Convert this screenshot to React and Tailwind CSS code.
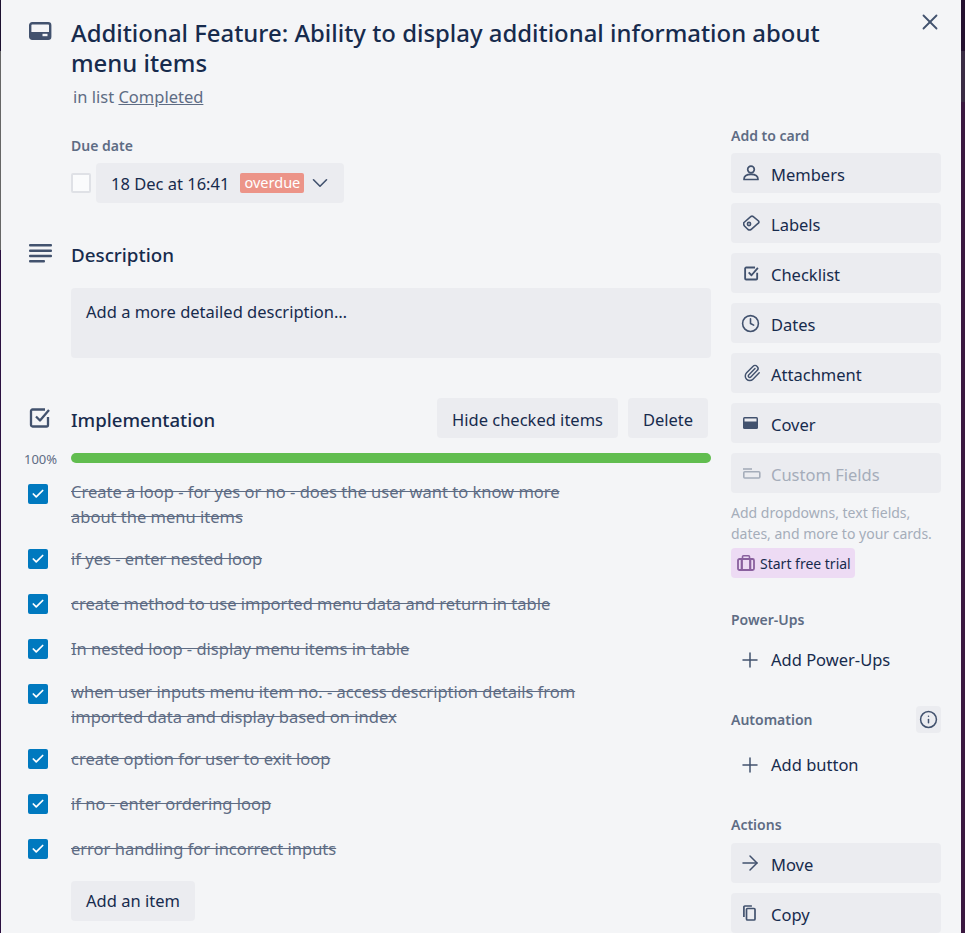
import React from 'react';
import { ChevronDown, X, Clock, Paperclip, Plus, ArrowRight, Info, Check } from 'lucide-react';

const checklist = [
  ['Create a loop - for yes or no - does the user want to know more', 'about the menu items'],
  ['if yes - enter nested loop'],
  ['create method to use imported menu data and return in table'],
  ['In nested loop - display menu items in table'],
  ['when user inputs menu item no. - access description details from', 'imported data and display based on index'],
  ['create option for user to exit loop'],
  ['if no - enter ordering loop'],
  ['error handling for incorrect inputs'],
];

const CardIcon = () => (
  <svg width="24" height="24" viewBox="0 0 24 24" fill="none">
    <rect x="2.200" y="4.200" width="20" height="15.600" rx="2" stroke="#42526e" strokeWidth="2.400" />
    <rect x="2.200" y="13" width="20" height="6.800" fill="#42526e" />
    <rect x="14.500" y="14.800" width="5" height="2.400" fill="#f4f5f7" />
  </svg>
);

const LinesIcon = () => (
  <svg width="24" height="24" viewBox="0 0 24 24" fill="#42526e">
    <rect x="1" y="3" width="23" height="2.400" rx="1" />
    <rect x="1" y="8.500" width="23" height="2.400" rx="1" />
    <rect x="1" y="13.800" width="23" height="2.400" rx="1" />
    <rect x="1" y="19" width="16" height="2.400" rx="1" />
  </svg>
);

const CheckSquare = ({ size = 24, width = 2.300 }) => (
  <svg width={size} height={size} viewBox="0 0 24 24" fill="none" stroke="#42526e" strokeWidth={width} strokeLinejoin="round">
    <path d="M20 11v8a1.500 1.500 0 0 1-1.500 1.500h-14A1.500 1.500 0 0 1 3 19V5a1.500 1.500 0 0 1 1.500-1.500H17" />
    <path d="M8 10.500l4 4 9-10.500" />
  </svg>
);

const MemberIcon = () => (
  <svg width="16" height="16" viewBox="0 0 16 16" fill="none" stroke="#42526e" strokeWidth="1.700">
    <circle cx="8" cy="4.500" r="3.300" />
    <path d="M1 14.200c0-3.400 3-4.800 7-4.800s7 1.400 7 4.800v.3H1z" strokeLinejoin="round" />
  </svg>
);

const TagIcon = () => (
  <svg width="17" height="16" viewBox="0 0 17 16" fill="none" stroke="#42526e" strokeWidth="1.600">
    <path d="M1 7.500L8 1.500Q9 .8 10 1.500L15.500 6Q16.500 7.500 15 8.500L8 14.500Q6.500 15.500 5 14.500L1.500 11Q0 9 1 7.500z" />
    <circle cx="6" cy="9" r="1.600" />
  </svg>
);

const CoverIcon = () => (
  <svg width="15" height="12" viewBox="0 0 15 12">
    <rect width="15" height="12" rx="1.500" fill="#42526e" />
    <rect x="1.500" y="1.500" width="12" height="3" fill="#ebecf0" />
  </svg>
);

const FieldsIcon = () => (
  <svg width="18" height="11" viewBox="0 0 18 11" fill="none" stroke="#a5adba" strokeWidth="1.600">
    <path d="M0 1h9" />
    <rect x=".8" y="3.800" width="16" height="6.200" rx="1" />
  </svg>
);

const CaseIcon = () => (
  <svg width="18" height="18" viewBox="0 0 18 18" fill="none" stroke="#89609e">
    <rect x="1" y="5" width="16" height="11" rx="1.500" strokeWidth="1.800" />
    <path d="M5.500 5V2.800a1 1 0 0 1 1-1h5a1 1 0 0 1 1 1V5" strokeWidth="1.600" />
    <path d="M4.800 5v11M13.200 5v11" strokeWidth="2.200" />
  </svg>
);

const CopyIcon = () => (
  <svg width="13" height="16" viewBox="0 0 13 16" fill="none" stroke="#42526e" strokeWidth="1.700">
    <path d="M.9 12V2a1 1 0 0 1 1-1h7" />
    <rect x="3.500" y="3.500" width="8.500" height="11.500" rx="1" />
  </svg>
);

const SideButton = ({ icon, label, muted }) => (
  <button className={`flex h-10 w-[210px] items-center rounded-[4px] bg-[#ebecf0] pl-3 text-left ${muted ? 'text-[#a5adba]' : 'text-[#172b4d]'}`}>
    <span className="flex w-[28px] justify-start">{icon}</span>
    <span className="pt-[4px]">{label}</span>
  </button>
);

const GhostButton = ({ label }) => (
  <button className="flex h-10 w-[210px] items-center pl-3 text-left text-[#172b4d]">
    <span className="flex w-[28px] justify-start"><Plus className="-ml-[5px]" size={24} color="#42526e" strokeWidth={1.500} /></span>
    {label}
  </button>
);

const SideLabel = ({ children }) => (
  <h3 className="text-[14px] leading-5 font-semibold text-[#5e6c84]">{children}</h3>
);

export default function App() {
  return (
    <div className="flex h-[933px] w-[965px] overflow-hidden font-['Noto_Sans',sans-serif] text-[16.500px] text-[#172b4d]">
      {/* Board peeking out either side of the modal */}
      <div className="flex w-px flex-col bg-[#2b1040]">
        <div className="h-[51px] bg-[#1c1030]" />
        <div className="h-[199px] bg-[#666666]" />
      </div>

      <div className="relative h-full w-[960px] bg-[#f4f5f7]">
        <button className="absolute top-[9px] right-[18px]"><X size={26} color="#42526e" strokeWidth={1.700} /></button>

        {/* Header */}
        <div className="flex pt-[18px] pl-[27px]">
          <span className="mt-[1px] w-[43px]"><CardIcon /></span>
          <div>
            <h2 className="w-[800px] text-[23.900px] leading-[30px] font-medium">
              Additional Feature: Ability to display additional information about menu items
            </h2>
            <p className="mt-[7px] ml-[2px] leading-[24px] text-[#5e6c84]">in list <span className="underline">Completed</span></p>
          </div>
        </div>

        <div className="mt-[27px] flex pr-[20px] pl-[27px]">
          {/* Main column */}
          <div className="w-[684px]">
            <div className="pl-[43px]">
              <h3 className="text-[14px] leading-5 font-semibold text-[#5e6c84]">Due date</h3>
              <div className="mt-[7px] flex items-center">
                <span className="h-5 w-5 rounded-[2px] border-2 border-[#dfe1e6] bg-[#fafbfc]" />
                <button className="ml-[5px] flex h-10 w-[248px] items-center rounded-[4px] bg-[#ebecf0] pl-[15px]">
                  <span className="pt-[2px]">18 Dec at 16:41</span>
                  <span className="ml-[11px] flex h-5 w-[64px] items-center justify-center rounded-[2px] bg-[#ec9488] text-[14.500px] text-white">overdue</span>
                  <ChevronDown className="ml-[3px]" size={26} color="#42526e" strokeWidth={1.500} />
                </button>
              </div>
            </div>

            {/* Description */}
            <div className="mt-[36px] flex h-8 items-center">
              <span className="-mt-[4px] w-[43px]"><LinesIcon /></span>
              <h3 className="text-[18.800px] font-medium">Description</h3>
            </div>
            <div className="mt-[17px] ml-[43px] h-[70px] w-[640px] rounded-[4px] bg-[#ebecf0] px-[15px] py-[12px]">Add a more detailed description…</div>

            {/* Checklist */}
            <div className="mt-[40px] flex h-10 items-center">
              <span className="w-[43px]"><CheckSquare /></span>
              <h3 className="flex-1 pt-[4px] text-[18.600px] font-medium">Implementation</h3>
              <button className="h-10 w-[181px] rounded-[4px] bg-[#ebecf0] pt-[4px]">Hide checked items</button>
              <button className="mr-[3px] ml-[10px] h-10 w-[80px] rounded-[4px] bg-[#ebecf0] pt-[4px]">Delete</button>
            </div>
            <div className="mt-[15px] flex h-[10px] items-center">
              <span className="-ml-[4px] w-[47px] pt-[4px] text-[13px] text-[#5e6c84]">100%</span>
              <div className="h-[10px] w-[640px] rounded-full bg-[#61bd4f]" />
            </div>

            <ul className="mt-[18px]">
              {checklist.map((lines) => (
                <li key={lines[0]} className={`flex ${lines.length > 1 ? '-mt-[2px] pb-[17px]' : 'pb-[20px]'}`}>
                  <span className={`flex h-5 w-5 items-center justify-center rounded-[2px] bg-[#0079bf] ${lines.length > 1 ? 'mt-[5px]' : 'mt-[3px]'}`}>
                    <Check size={14} color="#fff" strokeWidth={3} />
                  </span>
                  <div className="ml-[23px] leading-[25px] text-[#5e6c84] line-through">
                    {lines.map((line) => <div key={line}>{line}</div>)}
                  </div>
                </li>
              ))}
            </ul>
            <button className="ml-[43px] h-10 w-[124px] rounded-[4px] bg-[#ebecf0]">Add an item</button>
          </div>

          {/* Sidebar */}
          <aside className="-mt-[10px] ml-[20px] w-[210px]">
            <SideLabel>Add to card</SideLabel>
            <div className="mt-[7px] flex flex-col gap-[10px]">
              <SideButton icon={<MemberIcon />} label="Members" />
              <SideButton icon={<TagIcon />} label="Labels" />
              <SideButton icon={<CheckSquare size={17} width={2.600} />} label="Checklist" />
              <SideButton icon={<Clock className="-ml-[2px]" size={19} color="#42526e" strokeWidth={2} />} label="Dates" />
              <SideButton icon={<Paperclip size={18} color="#42526e" strokeWidth={1.900} />} label="Attachment" />
              <SideButton icon={<CoverIcon />} label="Cover" />
              <SideButton icon={<FieldsIcon />} label="Custom Fields" muted />
            </div>
            <p className="mt-[9px] text-[14px] leading-[21px] text-[#a5adba]">Add dropdowns, text fields, dates, and more to your cards.</p>
            <button className="mt-[4px] flex h-[30px] w-[124px] items-center gap-[5px] rounded-[4px] bg-[#eddbf4] pl-[6px] text-[14px] text-[#172b4d]">
              <CaseIcon />Start free trial
            </button>
            <div className="mt-[32px]"><SideLabel>Power-Ups</SideLabel></div>
            <div className="mt-[10px]"><GhostButton label="Add Power-Ups" /></div>
            <div className="mt-[26px] flex h-[27px] items-center justify-between">
              <SideLabel>Automation</SideLabel>
              <span className="flex h-[27px] w-[25px] items-center justify-center rounded-[4px] bg-[#ebecf0]"><Info size={19} color="#42526e" strokeWidth={1.900} /></span>
            </div>
            <div className="mt-[12px]"><GhostButton label="Add button" /></div>
            <div className="mt-[30px]"><SideLabel>Actions</SideLabel></div>
            <div className="mt-[8px] flex flex-col gap-[10px]">
              <SideButton icon={<ArrowRight className="-ml-[5px]" size={24} color="#42526e" strokeWidth={1.500} />} label="Move" />
              <SideButton icon={<CopyIcon />} label="Copy" />
            </div>
          </aside>
        </div>
      </div>

      <div className="flex w-[4px] flex-col bg-[#3a1840]">
        <div className="h-[51px] bg-[#24102f]" />
        <div className="h-[51px] bg-[#3a2c44]" />
      </div>
    </div>
  );
}
